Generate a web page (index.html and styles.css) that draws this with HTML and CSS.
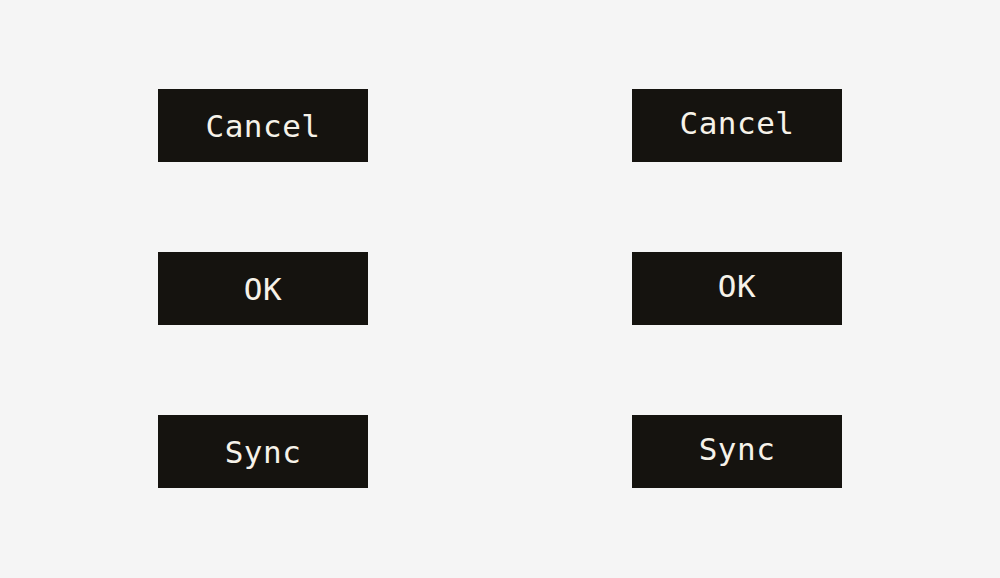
FILE: index.html
```html
<!DOCTYPE html>
<html lang="en">
<head>
<meta charset="utf-8">
<title>Buttons</title>
<link rel="stylesheet" href="styles.css">
</head>
<body>
<main class="board">
  <button class="btn">Cancel</button>
  <button class="btn btn-raised">Cancel</button>
  <button class="btn">OK</button>
  <button class="btn btn-raised">OK</button>
  <button class="btn">Sync</button>
  <button class="btn btn-raised">Sync</button>
</main>
</body>
</html>
```
FILE: styles.css
```css
html, body {
  margin: 0;
  padding: 0;
  background: #f5f5f5;
}
.board {
  display: grid;
  grid-template-columns: 210px 210px;
  grid-auto-rows: 73px;
  column-gap: 264px;
  row-gap: 90px;
  padding: 89px 158px;
}
.btn {
  display: flex;
  align-items: center;
  justify-content: center;
  margin: 0;
  padding: 0;
  border: none;
  border-radius: 0;
  background: #15130f;
  color: #f6f2e9;
  font-family: "DejaVu Sans Mono", "Liberation Mono", monospace;
  font-size: 31px;
  font-weight: normal;
  letter-spacing: 0.5px;
}
.btn-raised {
  padding-bottom: 6px;
}
```
